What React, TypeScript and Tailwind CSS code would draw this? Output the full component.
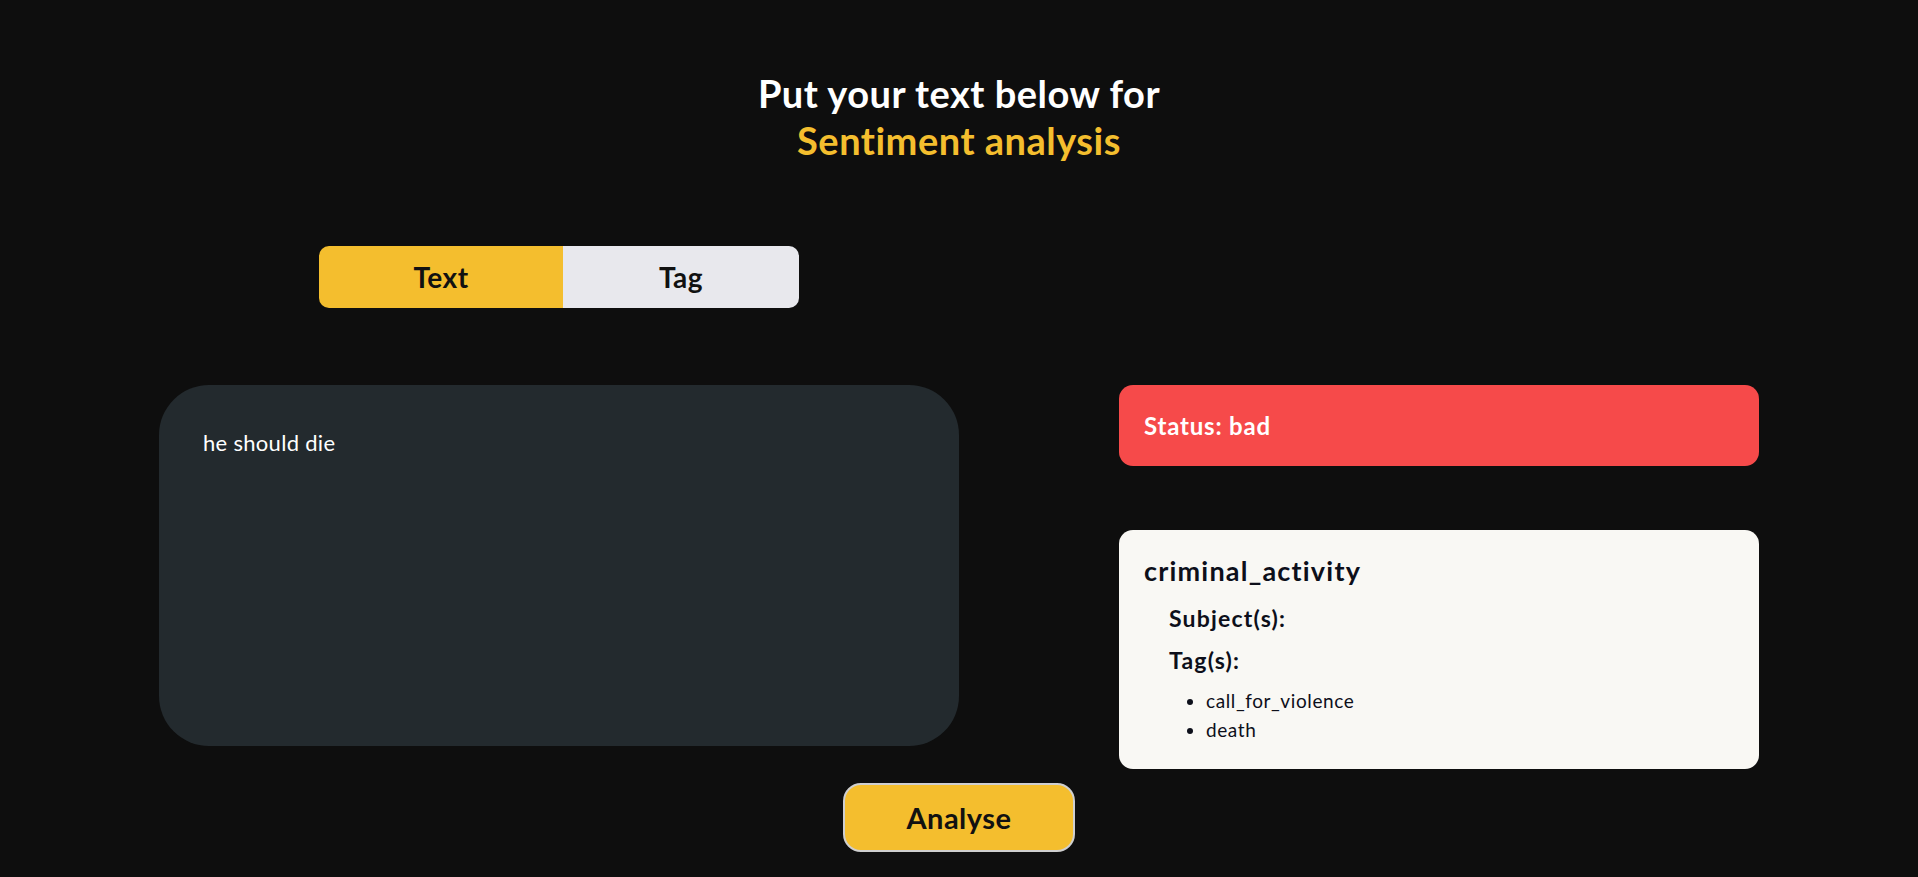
import React from "react";

export default function App() {
  return (
    <div className="min-h-screen w-full bg-[#0e0e0e] font-['Lato',sans-serif]">
      <div className="pt-[70px] text-center text-[38px] font-bold leading-[47px] tracking-[0.5px]">
        <h1 className="text-white">Put your text below for</h1>
        <h1 className="text-[#f4be2e]">Sentiment analysis</h1>
      </div>

      <div className="mx-auto mt-[82px] w-[1600px]">
        <div className="flex w-[800px] justify-center">
          <div className="flex h-[62px] w-[480px] overflow-hidden rounded-[10px]">
            <button className="flex w-[244px] items-center justify-center bg-[#f4be2e] text-[28px] font-bold tracking-[0.5px] text-[#111111]">
              Text
            </button>
            <button className="flex flex-1 items-center justify-center bg-[#e8e8ed] text-[28px] font-bold tracking-[0.5px] text-[#111111]">
              Tag
            </button>
          </div>
        </div>

        <div className="mt-[77px] flex justify-between">
          <textarea
            defaultValue="he should die"
            className="h-[361px] w-[800px] resize-none rounded-[50px] bg-[#232a2e] px-[44px] py-[44px] text-[22px] leading-[28px] tracking-[0.3px] text-white outline-none"
          />

          <div className="flex w-[640px] flex-col">
            <div className="flex h-[81px] items-center rounded-[14px] bg-[#f64a4a] px-[25px] text-[24px] font-bold tracking-[0.8px] text-white">
              Status: bad
            </div>

            <div className="mt-[64px] rounded-[14px] bg-[#f9f8f4] px-[25px] pt-[25px] pb-[25px] text-[#0d0f1a]">
              <div className="text-[27px] font-bold leading-[32px] tracking-[1.2px]">criminal_activity</div>
              <div className="ml-[25px] mt-[17px] text-[23px] font-bold leading-[28px] tracking-[1.2px]">Subject(s):</div>
              <div className="ml-[25px] mt-[14px] text-[23px] font-bold leading-[28px] tracking-[1.2px]">Tag(s):</div>
              <ul className="ml-[62px] mt-[12px] list-disc text-[19px] leading-[29px] tracking-[0.6px]">
                <li>call_for_violence</li>
                <li>death</li>
              </ul>
            </div>
          </div>
        </div>
      </div>

      <div className="mt-[14px] flex justify-center">
        <button className="flex h-[69px] w-[232px] items-center justify-center rounded-[18px] border-2 border-[#cfcfcf] bg-[#f4be2e] text-[29px] font-bold tracking-[0.5px] text-[#111111]">
          Analyse
        </button>
      </div>
    </div>
  );
}
